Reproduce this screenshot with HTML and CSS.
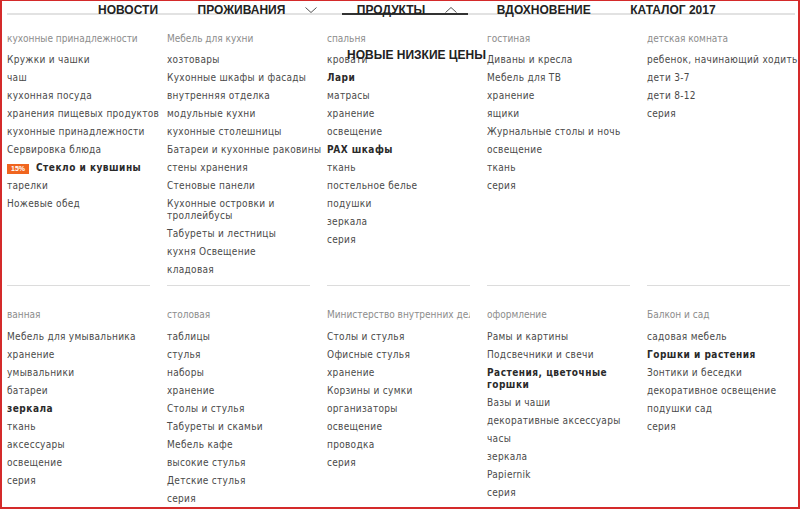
FILE: index.html
```html
<!DOCTYPE html>
<html lang="ru">
<head>
<meta charset="utf-8">
<title>Меню</title>
<link rel="stylesheet" href="styles.css">
</head>
<body>
<div class="frame">
  <nav class="nav">
    <a class="nav-item">НОВОСТИ</a>
    <a class="nav-item">ПРОЖИВАНИЯ<svg class="chev" width="12" height="6" viewBox="0 0 12 6"><path d="M0.5 0.5 L6 5.5 L11.5 0.5" fill="none" stroke="#555" stroke-width="1"/></svg></a>
    <a class="nav-item active">ПРОДУКТЫ<svg class="chev" width="12" height="6" viewBox="0 0 12 6"><path d="M0.5 5.5 L6 0.5 L11.5 5.5" fill="none" stroke="#555" stroke-width="1"/></svg></a>
    <a class="nav-item">ВДОХНОВЕНИЕ</a>
    <a class="nav-item">КАТАЛОГ 2017</a>
  </nav>
  <div class="promo">НОВЫЕ НИЗКИЕ ЦЕНЫ</div>
  <div class="menu">
    <div class="cell top">
      <div class="head">кухонные принадлежности</div>
      <ul>
        <li>Кружки и чашки</li>
        <li>чаш</li>
        <li>кухонная посуда</li>
        <li>хранения пищевых продуктов</li>
        <li>кухонные принадлежности</li>
        <li>Сервировка блюда</li>
        <li class="b"><span class="badge">15%</span>Стекло и кувшины</li>
        <li>тарелки</li>
        <li>Ножевые обед</li>
      </ul>
    </div>
    <div class="cell top">
      <div class="head">Мебель для кухни</div>
      <ul>
        <li>хозтовары</li>
        <li>Кухонные шкафы и фасады</li>
        <li>внутренняя отделка</li>
        <li>модульные кухни</li>
        <li>кухонные столешницы</li>
        <li>Батареи и кухонные раковины</li>
        <li>стены хранения</li>
        <li>Стеновые панели</li>
        <li>Кухонные островки и троллейбусы</li>
        <li>Табуреты и лестницы</li>
        <li>кухня Освещение</li>
        <li>кладовая</li>
      </ul>
    </div>
    <div class="cell top">
      <div class="head">спальня</div>
      <ul>
        <li>кровати</li>
        <li class="b">Лари</li>
        <li>матрасы</li>
        <li>хранение</li>
        <li>освещение</li>
        <li class="b">PAX шкафы</li>
        <li>ткань</li>
        <li>постельное белье</li>
        <li>подушки</li>
        <li>зеркала</li>
        <li>серия</li>
      </ul>
    </div>
    <div class="cell top">
      <div class="head">гостиная</div>
      <ul>
        <li>Диваны и кресла</li>
        <li>Мебель для ТВ</li>
        <li>хранение</li>
        <li>ящики</li>
        <li>Журнальные столы и ночь</li>
        <li>освещение</li>
        <li>ткань</li>
        <li>серия</li>
      </ul>
    </div>
    <div class="cell top">
      <div class="head">детская комната</div>
      <ul>
        <li class="nw">ребенок, начинающий ходить</li>
        <li>дети 3-7</li>
        <li>дети 8-12</li>
        <li>серия</li>
      </ul>
    </div>

    <div class="cell bottom">
      <div class="head">ванная</div>
      <ul>
        <li>Мебель для умывальника</li>
        <li>хранение</li>
        <li>умывальники</li>
        <li>батареи</li>
        <li class="b">зеркала</li>
        <li>ткань</li>
        <li>аксессуары</li>
        <li>освещение</li>
        <li>серия</li>
      </ul>
    </div>
    <div class="cell bottom">
      <div class="head">столовая</div>
      <ul>
        <li>таблицы</li>
        <li>стулья</li>
        <li>наборы</li>
        <li>хранение</li>
        <li>Столы и стулья</li>
        <li>Табуреты и скамьи</li>
        <li>Мебель кафе</li>
        <li>высокие стулья</li>
        <li>Детские стулья</li>
        <li>серия</li>
      </ul>
    </div>
    <div class="cell bottom">
      <div class="head">Министерство внутренних дел</div>
      <ul>
        <li>Столы и стулья</li>
        <li>Офисные стулья</li>
        <li>хранение</li>
        <li>Корзины и сумки</li>
        <li>организаторы</li>
        <li>освещение</li>
        <li>проводка</li>
        <li>серия</li>
      </ul>
    </div>
    <div class="cell bottom">
      <div class="head">оформление</div>
      <ul>
        <li>Рамы и картины</li>
        <li>Подсвечники и свечи</li>
        <li class="b">Растения, цветочные горшки</li>
        <li>Вазы и чаши</li>
        <li>декоративные аксессуары</li>
        <li>часы</li>
        <li>зеркала</li>
        <li>Papiernik</li>
        <li>серия</li>
      </ul>
    </div>
    <div class="cell bottom">
      <div class="head">Балкон и сад</div>
      <ul>
        <li>садовая мебель</li>
        <li class="b">Горшки и растения</li>
        <li>Зонтики и беседки</li>
        <li>декоративное освещение</li>
        <li>подушки сад</li>
        <li>серия</li>
      </ul>
    </div>
  </div>
</div>
</body>
</html>
```
FILE: styles.css
```css
html, body {
  margin: 0;
  padding: 0;
  background: #fff;
}
.frame {
  position: relative;
  width: 800px;
  height: 509px;
  box-sizing: border-box;
  border: 2px solid #d42a2a;
  border-top-width: 1px;
  overflow: hidden;
  font-family: "Liberation Sans", Arial, sans-serif;
  background: #fff;
}
.nav {
  display: flex;
  align-items: flex-start;
  height: 12px;
  margin: 0 3px 0 5px;
  padding-left: 76px;
  border-bottom: 2px solid #e2e2e2;
  gap: 13.5px;
}
.nav-item {
  display: flex;
  align-items: flex-start;
  box-sizing: border-box;
  height: 14px;
  padding: 3px 11px 0 15px;
  border-bottom: 2px solid transparent;
  font-size: 12px;
  line-height: 12px;
  font-weight: bold;
  color: #222;
  white-space: nowrap;
}
.nav-item.active {
  border-bottom-color: #333;
}
.chev {
  margin-left: 20px;
  margin-top: 3px;
}
.promo {
  position: absolute;
  left: 345px;
  top: 48px;
  font-size: 12px;
  line-height: 12px;
  font-weight: bold;
  color: #222;
  white-space: nowrap;
}
.menu {
  display: grid;
  grid-template-columns: repeat(5, 157px);
  column-gap: 3px;
  margin-left: 5px;
  font-family: "DejaVu Sans Condensed", "DejaVu Sans", "Liberation Sans", sans-serif;
  font-stretch: condensed;
}
.cell.top {
  display: flex;
  flex-direction: column;
  padding-top: 18px;
}
.cell.top::after {
  content: "";
  margin-top: auto;
  width: 143px;
  height: 1px;
  background: #dcdcdc;
}
.cell.top ul {
  margin-bottom: 3px;
}
.cell.bottom {
  padding-top: 23px;
}
.head {
  max-width: 143px;
  font-size: 10px;
  line-height: 12px;
  color: #8c8c8c;
  white-space: nowrap;
  overflow: hidden;
  margin-bottom: 9px;
}
.cell.bottom .head {
  margin-bottom: 10px;
}
ul {
  list-style: none;
  margin: 0;
  padding: 0;
}
li {
  font-size: 10px;
  line-height: 12px;
  letter-spacing: 0.3px;
  color: #4a4a4a;
  margin-bottom: 6px;
}
li.b {
  font-weight: bold;
  letter-spacing: 0.5px;
  color: #2a2a2a;
}
li.nw {
  white-space: nowrap;
}
.badge {
  display: inline-block;
  background: #f0651f;
  color: #fff;
  font-family: "Liberation Sans", Arial, sans-serif;
  font-stretch: normal;
  font-weight: bold;
  font-size: 7px;
  line-height: 10px;
  height: 10px;
  padding: 0 4px;
  margin-right: 7px;
  letter-spacing: 0;
  vertical-align: 0;
}
```
